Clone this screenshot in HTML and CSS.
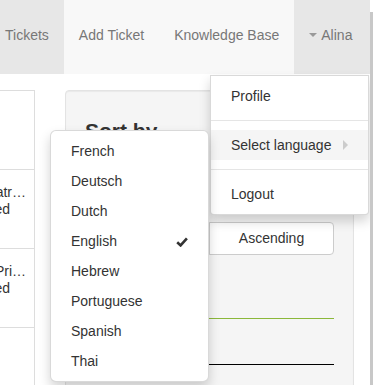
FILE: index.html
```html
<!DOCTYPE html>
<html lang="en">
<head>
    <meta charset="UTF-8">
    <title>Helpdesk</title>
    <link rel="stylesheet" href="styles.css">
</head>
<body>
<div class="page">
    <nav class="navbar">
        <ul class="nav">
            <li class="active"><a href="#">Tickets</a></li>
            <li><a href="#">Add Ticket</a></li>
            <li><a href="#">Knowledge Base</a></li>
            <li class="dropdown open">
                <a href="#" class="dropdown-toggle"><span class="caret"></span>Alina</a>
                <ul class="dropdown-menu">
                    <li><a href="#">Profile</a></li>
                    <li class="divider"></li>
                    <li class="dropdown-submenu hover">
                        <a href="#">Select language <span class="caret-right"></span></a>
                        <!-- подменю языков -->
                        <ul class="dropdown-menu submenu">
                            <li><a href="#">French</a></li>
                            <li><a href="#">Deutsch</a></li>
                            <li><a href="#">Dutch</a></li>
                            <li><a href="#">English
                                <svg class="check" width="12" height="10" viewBox="0 0 12 10"><path d="M1.2 5.2 L4.6 8.4 L10.9 1.3" fill="none" stroke="#333" stroke-width="2.6"/></svg>
                            </a></li>
                            <li><a href="#">Hebrew</a></li>
                            <li><a href="#">Portuguese</a></li>
                            <li><a href="#">Spanish</a></li>
                            <li><a href="#">Thai</a></li>
                        </ul>
                    </li>
                    <li class="divider"></li>
                    <li><a href="#">Logout</a></li>
                </ul>
            </li>
        </ul>
    </nav>

    <div class="content">
        <!-- список тикетов -->
        <div class="tickets">
            <div class="ticket-row"></div>
            <div class="ticket-row">
                <div class="ticket-title">Call from Cleopatr…</div>
                <div class="ticket-status">Closed</div>
            </div>
            <div class="ticket-row">
                <div class="ticket-title">Broken Pri…</div>
                <div class="ticket-status">Resolved</div>
            </div>
            <div class="ticket-row"></div>
        </div>

        <!-- сортировка -->
        <div class="well">
            <h3>Sort by</h3>
            <div class="btn-group">
                <button class="btn">Descending</button>
                <button class="btn">Ascending</button>
            </div>
            <div class="field field-active"></div>
            <div class="field"></div>
        </div>
    </div>
</div>
<div class="scrollbar"></div>
</body>
</html>
```

FILE: styles.css
```css
body {
    margin: 0;
    font-family: "Liberation Sans", Arial, sans-serif;
    font-size: 14px;
    color: #333;
    background: #fff;
    overflow: hidden;
    height: 385px;
}
ul {
    list-style: none;
    margin: 0;
    padding: 0;
}
a {
    text-decoration: none;
    color: inherit;
}
.page {
    width: 370px;
    height: 385px;
    overflow: hidden;
}
.navbar {
    margin-left: -10px;
    background-color: #f8f8f8;
    height: 74px;
}
.nav {
    display: flex;
    height: 74px;
}
.nav > li > a {
    display: block;
    padding: 25px 15px 29px;
    line-height: 20px;
    color: #777;
    white-space: nowrap;
}
.nav > li.active > a,
.nav > li.open > a {
    background-color: #e7e7e7;
}
.nav > li.dropdown {
    position: relative;
    flex: 1;
}
.caret {
    display: inline-block;
    width: 0;
    height: 0;
    border-top: 4px solid #999;
    border-left: 4px solid transparent;
    border-right: 4px solid transparent;
    vertical-align: middle;
    margin-right: 4px;
    margin-top: -2px;
}
.dropdown-menu {
    position: absolute;
    top: calc(100% + 1px);
    right: 1px;
    width: 159px;
    box-sizing: border-box;
    padding: 5px 0;
    background-color: #fff;
    border: 1px solid rgba(0, 0, 0, 0.15);
    border-radius: 0 0 4px 4px;
    box-shadow: 0 6px 12px rgba(0, 0, 0, 0.175);
    z-index: 10;
}
.dropdown-menu > li > a {
    display: block;
    padding: 5px 20px;
    line-height: 20px;
    color: #333;
    white-space: nowrap;
}
.dropdown-menu .divider {
    height: 1px;
    margin: 9px 0;
    background-color: #e5e5e5;
}
.dropdown-submenu {
    position: relative;
}
.dropdown-submenu.hover > a {
    background-color: #f5f5f5;
}
.caret-right {
    float: right;
    width: 0;
    height: 0;
    margin-top: 5px;
    border-left: 5px solid #ccc;
    border-top: 5px solid transparent;
    border-bottom: 5px solid transparent;
}
.submenu {
    top: 0;
    right: calc(100% + 2px);
    border-radius: 6px;
}
.check {
    float: right;
    margin-top: 6px;
}
.content {
    display: flex;
    align-items: flex-start;
    padding-top: 16px;
}
.tickets {
    flex: 0 0 200px;
    margin-left: -166px;
    border-top: 1px solid #ddd;
    border-right: 1px solid #ddd;
    height: 295px;
    overflow: hidden;
}
.ticket-row {
    height: 79px;
    border-bottom: 1px solid #ddd;
    padding: 14px 8px 0;
    box-sizing: border-box;
}
.ticket-title,
.ticket-status {
    line-height: 17px;
    white-space: nowrap;
    text-align: right;
}
.ticket-status {
    padding-right: 16px;
}
.well {
    flex: 0 0 289px;
    box-sizing: border-box;
    margin-left: 30px;
    height: 300px;
    padding: 19px;
    background-color: #f5f5f5;
    border: 1px solid #e3e3e3;
    border-radius: 4px;
    box-shadow: inset 0 1px 1px rgba(0, 0, 0, 0.05);
}
.well h3 {
    margin: 9px 0 80px;
    font-size: 21px;
    line-height: 23px;
    font-weight: bold;
    color: #333;
}
.btn-group {
    display: flex;
}
.btn {
    flex: 1;
    font-family: inherit;
    font-size: 14px;
    color: #333;
    line-height: 19px;
    padding: 6px 12px;
    background-color: #fff;
    border: 1px solid #ccc;
    border-radius: 0 4px 4px 0;
    margin: 0;
}
.btn:first-child {
    border-radius: 4px 0 0 4px;
    margin-right: -1px;
}
.field {
    height: 34px;
    margin-top: 11px;
    border-bottom: 1px solid #000;
}
.field-active {
    margin-top: 29px;
    border-bottom-color: #8bb83a;
}
.scrollbar {
    position: fixed;
    top: 12px;
    right: 0;
    bottom: 0;
    width: 3px;
    background-color: #c8c8c8;
}
```
